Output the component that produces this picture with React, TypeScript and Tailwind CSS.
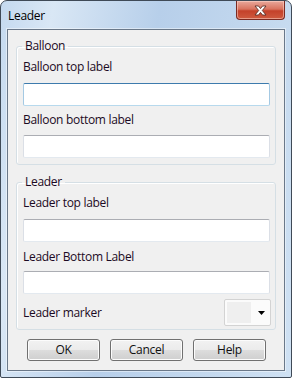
import React from "react"

const font = { fontFamily: '"Segoe UI", "Open Sans", "Noto Sans", sans-serif' }

function TextBox({ focused = false }: { focused?: boolean }) {
  return (
    <div
      className={
        focused
          ? "mr-[5px] ml-[6px] h-[23px] border border-[#a4c9e3] border-t-[#3d7bad] border-b-[#b7d9ed] bg-white rounded-[2px]"
          : "mr-[5px] ml-[6px] h-[23px] border border-[#dbdfe6] border-t-[#abadb3] border-b-[#e3e9ef] bg-white rounded-[2px]"
      }
    />
  )
}

function Label({ children, className = "" }: { children: React.ReactNode; className?: string }) {
  return (
    <div className={"ml-[6px] h-4 text-[12px] leading-4 tracking-[-0.3px] text-[#1c0a24] " + className}>
      {children}
    </div>
  )
}

function Group({ title, children, className = "" }: { title: string; children: React.ReactNode; className?: string }) {
  return (
    <fieldset
      className={
        "ml-[8px] w-[260px] border border-[#d5dfe5] rounded-[3px] shadow-[inset_1px_1px_0_#ffffff] " + className
      }
    >
      <legend className="ml-[5px] px-[3px] h-4 text-[12px] leading-4 tracking-[-0.3px] text-[#1c0a24]">{title}</legend>
      {children}
    </fieldset>
  )
}

function Button({ children }: { children: React.ReactNode }) {
  return (
    <button className="w-[73px] h-[22px] rounded-[3px] border border-[#707070] bg-[linear-gradient(#f2f2f2_0%,#ebebeb_50%,#dddddd_50%,#cfcfcf_100%)] shadow-[inset_0_0_0_1px_#fcfcfc] text-[12px] leading-4 tracking-[-0.3px] text-[#111111]">
      {children}
    </button>
  )
}

export default function App() {
  return (
    <div style={font} className="w-[292px] h-[378px] bg-white">
      <div className="w-[292px] h-[378px] flex flex-col border border-[#3f4a57] rounded-t-[7px] rounded-b-[2px] bg-[linear-gradient(100deg,#c4d9ef_0%,#d9e7f5_15%,#b7cfea_45%,#c3d8ee_75%,#cfe1f3_100%)] overflow-hidden">
        {/* Title bar */}
        <div className="h-[28px] flex items-start justify-between pl-[7px] pr-[6px]">
          <span className="mt-[7px] text-[12px] leading-4 tracking-[-0.3px] text-black">Leader</span>
          <div className="w-[49px] h-[19px] rounded-b-[4px] border border-t-0 border-[#7a2a22] bg-[linear-gradient(#e9a99c_0%,#d9735f_45%,#c4412a_55%,#cf5a3f_100%)] shadow-[inset_0_0_0_1px_rgba(255,220,210,0.5)] flex items-center justify-center">
            <svg width="13" height="11" viewBox="0 0 13 11">
              <path
                d="M1 1 H4.5 L6.5 3.6 L8.5 1 H12 L8.3 5.5 L12 10 H8.5 L6.5 7.4 L4.5 10 H1 L4.7 5.5 Z"
                fill="#ffffff"
                stroke="#5b3028"
                strokeWidth="0.9"
                strokeLinejoin="round"
              />
            </svg>
          </div>
        </div>

        {/* Client area */}
        <div className="mx-[6px] h-[342px] border border-[#6a7889] bg-[#f0f0f0] shadow-[0_0_0_1px_rgba(255,255,255,0.45)] flex flex-col">
          <Group title="Balloon" className="mt-[8px] pb-[6px]">
            <Label className="mt-[5px]">Balloon top label</Label>
            <div className="mt-[8px]">
              <TextBox focused />
            </div>
            <Label className="mt-[6px]">Balloon bottom label</Label>
            <div className="mt-[7px]">
              <TextBox />
            </div>
          </Group>

          <Group title="Leader" className="mt-[9px] pb-[3px]">
            <Label className="mt-[5px]">Leader top label</Label>
            <div className="mt-[8px]">
              <TextBox />
            </div>
            <Label className="mt-[7px]">Leader Bottom Label</Label>
            <div className="mt-[6px]">
              <TextBox />
            </div>
            <div className="mt-[5px] flex items-center justify-between ml-[6px] mr-[4px] h-[27px]">
              <span className="text-[12px] leading-4 tracking-[-0.3px] text-[#1c0a24]">Leader marker</span>
              <div className="w-[47px] h-[27px] border border-[#d3d3d3] rounded-[2px] bg-[#fbfbfb] flex items-center pl-[2px] pr-[5px] justify-between">
                <div className="w-[24px] h-[21px] bg-[#efefef]" />
                <svg width="7" height="4" viewBox="0 0 7 4">
                  <path d="M0 0 H7 L3.5 4 Z" fill="#000000" />
                </svg>
              </div>
            </div>
          </Group>

          <div className="mt-[9px] ml-[19px] flex gap-[10px]">
            <Button>OK</Button>
            <Button>Cancel</Button>
            <Button>Help</Button>
          </div>
        </div>
      </div>
    </div>
  )
}
